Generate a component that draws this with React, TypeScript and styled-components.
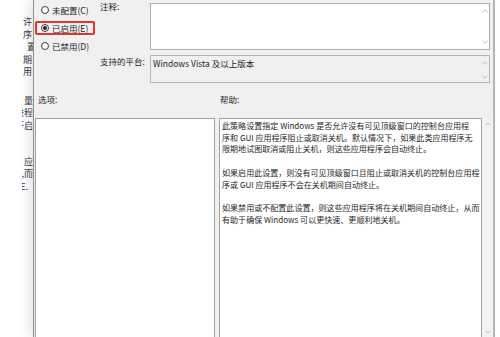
import React from "react";
import styled, { createGlobalStyle } from "styled-components";

const Global = createGlobalStyle`
  html, body { margin: 0; padding: 0; background: #ffffff; }
  body { font-family: "Noto Sans CJK SC", "Noto Sans", sans-serif; }
  * { box-sizing: border-box; }
`;

const Screen = styled.div`
  display: flex;
  width: 500px;
  height: 337px;
  overflow: hidden;
  background: #ffffff;
`;

/* ---------- window behind the dialog ---------- */
const BackWindow = styled.div`
  width: 33px;
  flex: none;
  padding: 16px 0 0 22px;
  overflow: hidden;
  font-size: 9px;
  color: #3a3a4a;
`;

const BackGroup = styled.div<{ $gap: number }>`
  margin-top: ${(p) => p.$gap}px;
`;

const BackLine = styled.div<{ $inset?: number }>`
  height: 12.5px;
  line-height: 12.5px;
  display: flex;
  justify-content: flex-end;
  overflow: hidden;
  white-space: nowrap;
  span {
    margin-right: ${(p) => p.$inset ?? 0}px;
  }
`;

/* ---------- dialog ---------- */
const Dialog = styled.div`
  width: 462px;
  flex: none;
  height: 100%;
  background: #f0f0f0;
  border-left: 1px solid #8d8d8d;
  border-right: 2px solid #b4b4b4;
  box-shadow: -5px 0 10px rgba(0, 0, 0, 0.09);
  display: flex;
  flex-direction: column;
  font-size: 8.5px;
  color: #262626;
`;

const TopSection = styled.div`
  display: flex;
  align-items: flex-start;
  height: 83px;
  flex: none;
`;

const RadioGroup = styled.div`
  width: 66px;
  flex: none;
  padding-top: 3px;
  display: flex;
  flex-direction: column;
`;

const RadioRow = styled.div<{ $marked?: boolean }>`
  height: 14px;
  width: 60px;
  margin: 0 0 4px 1px;
  border: 2px solid ${(p) => (p.$marked ? "#e3342b" : "transparent")};
  border-radius: 2px;
  display: flex;
  align-items: center;
  gap: 3px;
  padding-left: 4px;
  white-space: nowrap;
  line-height: 1;
`;

const RadioDot = styled.span<{ $checked?: boolean }>`
  width: 8px;
  height: 8px;
  flex: none;
  border-radius: 50%;
  border: 1px solid #3a3a3a;
  background: #ffffff;
  display: flex;
  align-items: center;
  justify-content: center;
  &::after {
    content: "";
    width: 4px;
    height: 4px;
    border-radius: 50%;
    background: #222222;
    display: ${(p) => (p.$checked ? "block" : "none")};
  }
`;

const FieldGrid = styled.div`
  display: grid;
  grid-template-columns: 50px 340px;
  grid-template-rows: 47px 28px;
  row-gap: 5px;
  padding-top: 3px;
`;

const FieldLabel = styled.div<{ $offset: number }>`
  line-height: 10px;
  margin-top: ${(p) => p.$offset}px;
  white-space: nowrap;
`;

const TextBox = styled.div<{ $readonly?: boolean }>`
  display: flex;
  border: 1px solid ${(p) => (p.$readonly ? "#b6b6b6" : "#abadb3")};
  background: ${(p) => (p.$readonly ? "#f0f0f0" : "#ffffff")};
`;

const BoxText = styled.div`
  flex: 1;
  padding: 2px 2px;
  line-height: 10px;
  white-space: nowrap;
`;

const ScrollCol = styled.div<{ $top: number; $bottom: number }>`
  width: 9px;
  flex: none;
  display: flex;
  flex-direction: column;
  justify-content: space-between;
  align-items: center;
  padding: ${(p) => p.$top}px 0 ${(p) => p.$bottom}px;
`;

const BottomSection = styled.div`
  display: grid;
  grid-template-columns: 180px 274px;
  grid-template-rows: 12px auto;
  column-gap: 4px;
  row-gap: 13px;
  padding-top: 10px;
  margin-left: 1px;
`;

const PaneLabel = styled.div<{ $pad: number }>`
  line-height: 12px;
  padding-left: ${(p) => p.$pad}px;
`;

const OptionsBox = styled.div`
  height: 220px;
  background: #ffffff;
  border: 1px solid #9e9e9e;
`;

const HelpPane = styled.div`
  display: flex;
  height: 220px;
`;

const HelpText = styled.div`
  width: 263px;
  flex: none;
  background: #ffffff;
  border: 1px solid #a3a3a3;
  padding: 1px 2px 0 2px;
  font-size: 8.05px;
  line-height: 11.7px;
  color: #1f1f1f;
  overflow: hidden;
`;

const HelpPara = styled.p`
  margin: 0 0 11.7px;
  white-space: nowrap;
`;

const HelpScroll = styled.div`
  flex: 1;
  background: #f3f3f3;
  display: flex;
  flex-direction: column;
  justify-content: space-between;
  align-items: center;
  padding: 4px 0 4px;
`;

const Chevron = ({ down }: { down?: boolean }) => (
  <svg width="6" height="4" viewBox="0 0 6 4">
    <path
      d={down ? "M0.5 0.8 L3 3.2 L5.5 0.8" : "M0.5 3.2 L3 0.8 L5.5 3.2"}
      fill="none"
      stroke="#b2b2b2"
      strokeWidth="0.9"
    />
  </svg>
);

const help = [
  [
    "此策略设置指定 Windows 是否允许没有可见顶级窗口的控制台应用程",
    "序和 GUI 应用程序阻止或取消关机。默认情况下，如果此类应用程序无",
    "限期地试图取消或阻止关机，则这些应用程序会自动终止。",
  ],
  [
    "如果启用此设置，则没有可见顶级窗口且阻止或取消关机的控制台应用程",
    "序或 GUI 应用程序不会在关机期间自动终止。",
  ],
  [
    "如果禁用或不配置此设置，则这些应用程序将在关机期间自动终止，从而",
    "有助于确保 Windows 可以更快速、更顺利地关机。",
  ],
];

export default function App() {
  return (
    <>
      <Global />
      <Screen>
        <BackWindow>
          <BackGroup $gap={0}>
            <BackLine $inset={1}><span>许</span></BackLine>
            <BackLine $inset={1}><span>序</span></BackLine>
            <BackLine $inset={-3}><span>置</span></BackLine>
            <BackLine $inset={1}><span>期</span></BackLine>
            <BackLine $inset={1}><span>用</span></BackLine>
          </BackGroup>
          <BackGroup $gap={16}>
            <BackLine><span>：量</span></BackLine>
            <BackLine><span>进程</span></BackLine>
            <BackLine><span>开启</span></BackLine>
          </BackGroup>
          <BackGroup $gap={23.5}>
            <BackLine><span>应</span></BackLine>
            <BackLine><span>,而</span></BackLine>
            <BackLine $inset={5}><span>E.</span></BackLine>
          </BackGroup>
        </BackWindow>

        <Dialog>
          <TopSection>
            <RadioGroup>
              <RadioRow>
                <RadioDot />
                <span>未配置(C)</span>
              </RadioRow>
              <RadioRow $marked>
                <RadioDot $checked />
                <span>已启用(E)</span>
              </RadioRow>
              <RadioRow>
                <RadioDot />
                <span>已禁用(D)</span>
              </RadioRow>
            </RadioGroup>
            <FieldGrid>
              <FieldLabel $offset={-2}>注释:</FieldLabel>
              <TextBox>
                <BoxText />
                <ScrollCol $top={5} $bottom={5}>
                  <Chevron />
                  <Chevron down />
                </ScrollCol>
              </TextBox>
              <FieldLabel $offset={1}>支持的平台:</FieldLabel>
              <TextBox $readonly>
                <BoxText>Windows Vista 及以上版本</BoxText>
                <ScrollCol $top={5} $bottom={3}>
                  <Chevron />
                  <Chevron down />
                </ScrollCol>
              </TextBox>
            </FieldGrid>
          </TopSection>

          <BottomSection>
            <PaneLabel $pad={3}>选项:</PaneLabel>
            <PaneLabel $pad={1}>帮助:</PaneLabel>
            <OptionsBox />
            <HelpPane>
              <HelpText>
                {help.map((para, i) => (
                  <HelpPara key={i}>
                    {para.map((line, j) => (
                      <React.Fragment key={j}>
                        {line}
                        {j < para.length - 1 && <br />}
                      </React.Fragment>
                    ))}
                  </HelpPara>
                ))}
              </HelpText>
              <HelpScroll>
                <Chevron />
                <Chevron down />
              </HelpScroll>
            </HelpPane>
          </BottomSection>
        </Dialog>
      </Screen>
    </>
  );
}
